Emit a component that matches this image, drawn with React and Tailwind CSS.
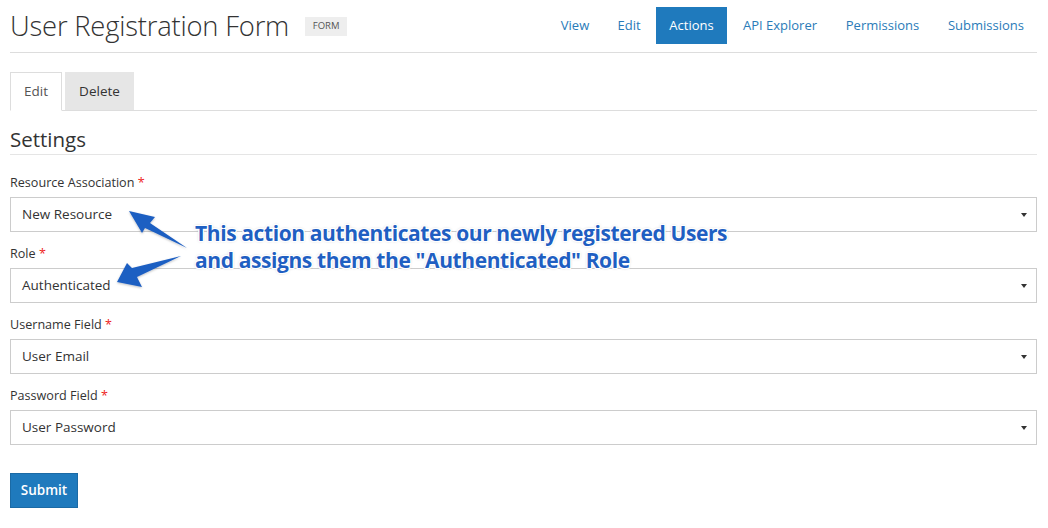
import React from "react";

const navItems = [
  ["View", "w-[54px]"],
  ["Edit", "w-[48px]"],
  ["Actions", "w-[71px]"],
  ["API Explorer", "w-[100px]"],
  ["Permissions", "w-[99px]"],
  ["Submissions", "w-[102px]"],
];

function Field({ label, value }) {
  return (
    <div className="mb-[12px]">
      <div className="h-[20px] text-[12.6px] leading-[20px] text-[#333] mb-[4px]">
        {label} <span className="text-[#e22]">*</span>
      </div>
      <div className="h-[35px] border border-[#ccc] flex items-center justify-between pl-[11px] pr-[9px] text-[13.5px] text-[#333] bg-white">
        <span>{value}</span>
        <span className="w-0 h-0 border-l-[3px] border-r-[3px] border-t-[4px] border-l-transparent border-r-transparent border-t-[#333]" />
      </div>
    </div>
  );
}

export default function App() {
  return (
    <div className="w-[1048px] h-[528px] bg-white overflow-hidden relative" style={{ fontFamily: '"Open Sans", sans-serif' }}>
      <div className="pl-[10px] pr-[11px]">
        {/* Header */}
        <div className="flex items-start justify-between border-b border-[#ddd] h-[53px] pt-[7px]">
          <div className="flex items-center h-[37px]">
            <h1 className="text-[27.4px] font-light text-[#333] leading-none tracking-[-0.2px]">User Registration Form</h1>
            <span className="ml-[16px] bg-[#eee] text-[#555] text-[9.5px] w-[42px] justify-center h-[19px] flex items-center mt-[2px]">FORM</span>
          </div>
          <div className="flex gap-[3px]">
            {navItems.map(([n, w]) => (
              <div
                key={n}
                className={
                  "h-[37px] flex items-center justify-center text-[13px] " + w + " " +
                  (n === "Actions" ? "bg-[#1f7abd] text-white" : "text-[#2a7bb8]")
                }
              >
                {n}
              </div>
            ))}
          </div>
        </div>

        {/* Tabs */}
        <div className="mt-[19px] flex gap-[3px] border-b border-[#ddd] h-[39px]">
          <div className="h-[39px] w-[52px] justify-center flex items-center text-[13.5px] text-[#555] border border-[#ddd] border-b-white bg-white">Edit</div>
          <div className="h-[38px] w-[69px] justify-center flex items-center text-[13.5px] text-[#333] bg-[#e6e6e6]">Delete</div>
        </div>

        {/* Settings */}
        <div className="mt-[15px] text-[20.5px] text-[#333] leading-[26px] pb-[2px] border-b border-[#e5e5e5]">Settings</div>

        <div className="mt-[18px]">
          <Field label="Resource Association" value="New Resource" />
          <Field label="Role" value="Authenticated" />
          <Field label="Username Field" value="User Email" />
          <Field label="Password Field" value="User Password" />
        </div>

        <button className="mt-[16px] h-[35px] w-[68px] bg-[#1f7abd] border border-[#1b6aa5] text-white text-[13.5px] font-semibold">Submit</button>
      </div>

      {/* Annotation arrows */}
      <svg className="absolute left-0 top-0 pointer-events-none" width="1048" height="528">
        <defs>
          <filter id="sh" x="-20%" y="-20%" width="140%" height="140%">
            <feDropShadow dx="0" dy="1" stdDeviation="1" floodColor="#000" floodOpacity="0.25" />
          </filter>
        </defs>
        <g fill="#1f5fc2" filter="url(#sh)">
          <polygon points="129,211 155,217 150,223 187,248 145,228 142,233" />
          <polygon points="117,282 127,263 132,268 181,256 137,277 142,287" />
        </g>
      </svg>

      {/* Annotation text */}
      <div
        className="absolute left-[195px] top-[220px] text-[21px] font-bold leading-[27px] text-[#1f5fc2] tracking-[-0.4px]"
        style={{
          textShadow:
            "1px 0 0 #fff, -1px 0 0 #fff, 0 1px 0 #fff, 0 -1px 0 #fff, 1px 1px 0 #fff, -1px -1px 0 #fff, 1px -1px 0 #fff, -1px 1px 0 #fff, 0 0 3px rgba(0,0,0,0.35)",
        }}
      >
        <div>This action authenticates our newly registered Users</div>
        <div>and assigns them the "Authenticated" Role</div>
      </div>
    </div>
  );
}
